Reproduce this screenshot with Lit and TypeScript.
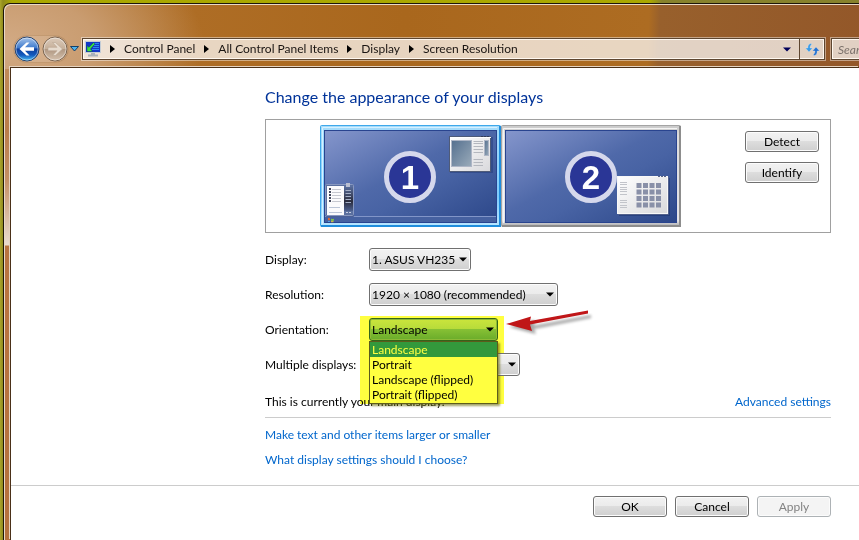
import { LitElement, html, css, svg, nothing } from "lit";
import { customElement, property, state } from "lit/decorators.js";
import { classMap } from "lit/directives/class-map.js";

const range = (n: number) => Array.from({ length: n }, (_, i) => i);

@customElement("display-monitor")
class DisplayMonitor extends LitElement {
  @property({ type: Number }) number = 1;
  @property({ type: Boolean }) selected = false;

  static styles = css`
    :host { display: block; }
    button { display: block; padding: 0; border: 0; background: none; cursor: pointer; }
    svg { display: block; }
    .digit { font: bold 33px "Liberation Sans", Arial, sans-serif; fill: #fff; text-anchor: middle; }
  `;

  private desktopOne() {
    return svg`
      <path d="M5 91.5H176" stroke="#8195c8" />
      <rect x="5" y="92" width="171" height="5" fill="#4661a0" />
      <path d="M8 93q2-1 2 1v1.500q-1-1-2 0z" fill="#e0662e" />
      <path d="M11 93.500q2 1 3 0v2q-2 1-3 0z" fill="#7fc04a" />
      <path d="M8 96q2-1 2 1h-2z" fill="#4aa0e8" />
      <path d="M11 96.200h2.500v1h-2.500z" fill="#f2c63c" />
      <rect x="6" y="60" width="28" height="32" rx="1" fill="#34497f" opacity=".7" />
      <rect x="5.500" y="59.500" width="28" height="31" rx="1" fill="#5a6f9f" stroke="#8898c0" />
      <rect x="24" y="62" width="9" height="24" fill="url(#dark)" />
      <rect x="26" y="58" width="4" height="4" fill="#b9bed0" />
      <rect x="7" y="61" width="17" height="29" fill="#fbfbfd" />
      ${range(5).map((i) => svg`
        <rect x="9" y=${63 + i * 3} width="2" height="2" fill="#44485c" />
        <path d="M12 ${64.5 + i * 3}H21" stroke="#c6c8d0" />
        <path d="M25.500 ${65.5 + i * 3}H31" stroke="#a5b0c8" />`)}
      <path d="M9 82.500H20M9 87.500H22" stroke="#bcc6d8" />
      <path d="M26 87.500H32" stroke="#c6cde0" stroke-dasharray="2 1" />
      <rect x="130" y="12" width="43" height="36" fill="#223a78" opacity=".5" />
      <rect x="129.500" y="11.500" width="41" height="35" fill="url(#panel)" stroke="#4f5b78" />
      <path d="M130 12.500H171" stroke="#fff" />
      <path d="M161 11.500H170" stroke="#333c58" stroke-dasharray="2 1" />
      <rect x="131.500" y="15.500" width="20" height="26" fill="url(#photo)" stroke="#aeb6c6" />
      <path d="M153.500 16.500H163M153.500 18.500H163M153.500 21.500H163M153.500 24.500H163M153.500 27.500H163M153.500 34.500H163M153.500 37.500H163M153.500 40.500H163" stroke="#b4b7be" />
      <rect x="164.500" y="15.500" width="4" height="15" fill="url(#photo)" stroke="#aeb6c6" />`;
  }

  private desktopTwo() {
    return svg`
      <rect x="118" y="53" width="51" height="38" fill="#182f6c" opacity=".5" />
      <rect x="116.500" y="51.500" width="50" height="37" fill="url(#panel)" stroke="#f8f8f8" />
      <path d="M167.500 52V89.500H117" stroke="#53618c" fill="none" />
      <path d="M157 51.500H166" stroke="#596487" stroke-dasharray="2 1" />
      ${[57, 59, 62, 64, 66, 69, 75, 77, 80, 82].map((y) => svg`<path d="M119 ${y + 0.5}H126" stroke="#c2c4ca" />`)}
      ${range(16).map((i) => svg`
        <rect x=${135.5 + (i % 4) * 6.5} y=${58 + Math.floor(i / 4) * 6.5} width="5" height="5" fill="#8990a8" />`)}`;
  }

  render() {
    const w = this.selected ? 181 : 180;
    return html`
      <button aria-pressed=${this.selected} aria-label="Display ${this.number}">
        <svg width=${w} height="102" viewBox="0 0 ${w} 102">
          <defs>
            <linearGradient id="screen" x1="0" y1="0" x2="1" y2="1">
              <stop offset="0" stop-color="#8596cc" /><stop offset=".45" stop-color="#4f69a9" />
              <stop offset=".6" stop-color="#4863a4" /><stop offset="1" stop-color="#2c4789" />
            </linearGradient>
            <linearGradient id="glow" x1="0" y1="0" x2="0" y2="1">
              <stop offset="0" stop-color="#a6dcfb" /><stop offset=".7" stop-color="#7fcafb" />
              <stop offset="1" stop-color="#b9e6ff" />
            </linearGradient>
            <linearGradient id="silver" x1="0" y1="0" x2="0" y2="1">
              <stop offset="0" stop-color="#c9c9c9" /><stop offset=".1" stop-color="#dedede" />
              <stop offset=".94" stop-color="#e4e4e8" /><stop offset="1" stop-color="#a8a8a8" />
            </linearGradient>
            <linearGradient id="panel" x1="0" y1="0" x2="1" y2="1">
              <stop offset="0" stop-color="#fff" /><stop offset="1" stop-color="#d9d9dc" />
            </linearGradient>
            <linearGradient id="photo" x1="0" y1="0" x2="1" y2="1">
              <stop offset="0" stop-color="#55708f" /><stop offset="1" stop-color="#9aabba" />
            </linearGradient>
            <linearGradient id="dark" x1="0" y1="0" x2="0" y2="1">
              <stop offset="0" stop-color="#566a98" /><stop offset=".6" stop-color="#2b2c3c" />
              <stop offset="1" stop-color="#4c6090" />
            </linearGradient>
          </defs>
          ${this.selected
            ? svg`<rect x=".5" y=".5" width=${w - 1} height="101" rx="1" fill="url(#glow)" stroke="#3fa8ea" />
                <path d="M${w - 1} 1V101H1" fill="none" stroke="#1f8ddc" stroke-width="2" />
                <path d="M2.500 99V2.500H${w - 4}" fill="none" stroke="#d5f0ff" />`
            : svg`<rect x=".5" y=".5" width=${w - 1} height="101" rx="1" fill="url(#silver)" stroke="#a4a4a4" />
                <path d="M${w - 1} 1V101H1" fill="none" stroke="#8d8d8d" stroke-width="2" />
                <path d="M2.500 98V3.500H${w - 4}" fill="none" stroke="#f4f4f4" />`}
          <rect x="4.500" y="5.500" width=${w - 9} height="92" fill="url(#screen)" stroke="#29448f" />
          ${this.number === 1 ? this.desktopOne() : nothing}
          <circle cx=${w >> 1} cy="52" r="23.500" fill="#2a3696" stroke="#d5d8ec" stroke-width="5" />
          <text class="digit" x=${w >> 1} y="64">${this.number}</text>
          ${this.number === 2 ? this.desktopTwo() : nothing}
        </svg>
      </button>`;
  }
}

@customElement("app-root")
class AppRoot extends LitElement {
  @state() private orientation = "Landscape";

  private readonly crumbs = ["Control Panel", "All Control Panel Items", "Display", "Screen Resolution"];
  private readonly orientations = ["Landscape", "Portrait", "Landscape (flipped)", "Portrait (flipped)"];

  static styles = css`
    :host {
      display: flex;
      box-sizing: border-box;
      min-height: 100vh;
      padding: 3px 0 0 3px;
      background: linear-gradient(90deg, #aaa52c, #8f8a1c 3px, #aaa800 12px, #aaa800 650px, #87822c 662px);
      font: 12px/18px Lato, "Open Sans", sans-serif;
      color: #000;
      overflow: hidden;
    }
    * { box-sizing: border-box; }
    button, input, select { font: inherit; color: inherit; margin: 0; }
    svg { display: block; flex: none; }

    .window {
      flex: 1;
      min-width: 0;
      display: flex;
      flex-direction: column;
      border: solid #1d1608;
      border-width: 1px 0 0 1px;
      border-radius: 7px 0 0 0;
      box-shadow: inset 1px 1px #ead9c6;
      padding: 1px 0 0 6px;
      background:
        linear-gradient(#c08a58, #b97c4a 60px, #c48f64 110px, #e9dccf 176px, #b97440 177px, #b4703c) 0 65px / 6px 100% no-repeat,
        radial-gradient(ellipse 200px 110px at 0 40px, #d2aa84, #c99c70 45%, #c99c7000),
        linear-gradient(92deg, #b67c3c, #ae6d25 190px, #a9671d 400px, #ad6c22 645px, #98602c 656px, #935729);
    }
    .toolbar {
      display: flex;
      align-items: center;
      padding: 33px 0 6px 4px;
    }
    .travel { display: flex; align-items: center; height: 22px; }
    .travel button { padding: 0; border: 0; background: none; }
    .pair {
      display: flex;
      gap: 2px;
      border-radius: 13px;
      background: #ffffff20;
      box-shadow: 0 0 1px #6b4520;
    }
    .pages { margin: 0 3px 0 2px; }

    .address {
      flex: 1;
      min-width: 0;
      height: 22px;
      display: flex;
      align-items: stretch;
      border: 1px solid #5d4630;
      background: #ffffffb8;
      box-shadow: 0 0 0 1px #ffffff70, inset 0 0 0 1px #fff8f0;
    }
    .crumbs {
      flex: 1;
      min-width: 0;
      display: flex;
      align-items: center;
      margin: 0;
      padding: 0 0 0 2px;
      list-style: none;
      white-space: nowrap;
    }
    .crumbs li { display: flex; align-items: center; }
    .crumbs .arrow { margin: 0 9px; }
    .crumbs a { color: #1a1512; text-decoration: none; }
    .tool {
      width: 25px;
      display: grid;
      place-items: center;
      padding: 0;
      border: 0;
      background: none;
    }
    .refresh { border-left: 1px solid #5d4630; }
    .search {
      flex: none;
      width: 28px;
      height: 22px;
      margin-left: 6px;
      padding: 0 0 0 6px;
      border: 1px solid #5d4630;
      border-right: 0;
      border-radius: 0;
      background: #ffffffb8;
      box-shadow: 0 0 0 1px #ffffff70, inset 1px 0 #fff8f0, inset 0 1px #fff8f0, inset 0 -1px #fff8f0;
      font-style: italic;
    }
    .search::placeholder { color: #7b716b; opacity: 1; }

    .page {
      flex: 1;
      border: solid #4a3018;
      border-width: 1px 0 0 1px;
      box-shadow: -1px -1px #e6d3bf;
      margin-top: 1px;
      background: #fff;
    }
    .settings { padding: 19px 28px 16px 254px; }
    h1 {
      margin: 0 0 12px;
      font-size: 16px;
      font-weight: 400;
      line-height: 20px;
      color: #003399;
    }
    .preview {
      display: flex;
      height: 114px;
      border: 1px solid #a0a0a0;
      padding: 5px 11px 5px 0;
    }
    .monitors { flex: 1; display: flex; justify-content: center; padding-right: 11px; }
    .actions { display: flex; flex-direction: column; gap: 10px; padding-top: 6px; }
    .push {
      width: 74px;
      height: 21px;
      padding: 0;
      border: 1px solid #707070;
      border-radius: 3px;
      background: linear-gradient(#f2f2f2, #ebebeb 49%, #dddddd 50%, #cfcfcf);
      box-shadow: inset 0 0 0 1px #fcfcfc;
      line-height: 18px;
    }
    .push:disabled { border-color: #adb2b5; background: #f4f4f4; color: #838383; }

    .form {
      display: grid;
      grid-template-columns: 104px 1fr;
      row-gap: 12px;
      align-items: center;
      margin-top: 15px;
    }
    .form label { white-space: nowrap; }
    .field { position: relative; display: grid; height: 23px; align-items: center; }
    .short { width: 102px; }
    .long { width: 189px; }
    .medium { width: 129px; }
    .wide { width: 151px; }
    .field select, .caret { grid-area: 1 / 1; }
    .caret { justify-self: end; margin-right: 4px; pointer-events: none; }
    .field select {
      appearance: none;
      width: 100%;
      height: 23px;
      padding: 0 14px 0 2px;
      border: 1px solid #707070;
      border-radius: 3px;
      background: linear-gradient(#f2f2f2, #ebebeb 49%, #dddddd 50%, #cfcfcf);
      box-shadow: inset 0 0 0 1px #fcfcfc;
    }
    .field.open select {
      position: relative;
      z-index: 1;
      border-color: #35651a;
      background: linear-gradient(#cbe53c, #b6db3a 49%, #86c034 50%, #6aac2a);
      box-shadow: inset 0 0 0 1px #8dba36;
    }
    .open .caret { position: relative; z-index: 1; }
    .marker {
      position: absolute;
      inset: -2px -6px -63px -9px;
      background: #ffff40;
      mix-blend-mode: multiply;
      pointer-events: none;
    }
    .list {
      position: absolute;
      z-index: 1;
      top: 23px;
      left: 0;
      right: 0;
      margin: 0;
      padding: 0 0 1px;
      border: 1px solid #5c5c1c;
      background: #ffff40;
      box-shadow: 2px 2px 2px #62620099;
      list-style: none;
      line-height: 15px;
      cursor: default;
    }
    .list li { padding: 0 2px; white-space: nowrap; }
    .list .chosen { background: #33993c; color: #ffff40; }
    .pointer { position: absolute; left: 134px; top: -12px; pointer-events: none; }

    .status {
      display: flex;
      justify-content: space-between;
      margin: 17px 0 8px;
      padding-bottom: 6px;
      border-bottom: 1px solid #ccc;
    }
    .settings a { color: #0066cc; text-decoration: none; }
    .links { display: grid; justify-items: start; gap: 7px; }
    .commit {
      display: flex;
      justify-content: flex-end;
      gap: 8px;
      padding: 10px 28px 22px 0;
      border-top: 1px solid #ccc;
    }
  `;

  private caret = () => html`
    <svg class="caret" width="8" height="5" viewBox="0 0 8 5" aria-hidden="true"><path d="M0 0.500H8L4 4.500z" fill="#000" /></svg>`;

  private arrow = () => html`
    <svg class="arrow" width="5" height="8" viewBox="0 0 5 8" aria-hidden="true"><path d="M0 0L5 4L0 8z" fill="#000" /></svg>`;

  private travelButton(back: boolean) {
    const id = back ? "orb-back" : "orb-forward";
    return html`
      <button aria-label=${back ? "Back" : "Forward"} ?disabled=${!back}>
        <svg width="26" height="26" viewBox="0 0 26 26">
          <defs>
            <linearGradient id=${id} x1="0" y1="0" x2="0" y2="1">
              ${back
                ? svg`<stop offset="0" stop-color="#a9c6ea" /><stop offset=".45" stop-color="#3f7bce" />
                    <stop offset=".5" stop-color="#0f3f9c" /><stop offset=".75" stop-color="#1259bd" /><stop offset="1" stop-color="#4dc4f8" />`
                : svg`<stop offset="0" stop-color="#dccbbb" /><stop offset=".48" stop-color="#c6b09a" />
                    <stop offset=".52" stop-color="#b09882" /><stop offset="1" stop-color="#d6c2ae" />`}
            </linearGradient>
          </defs>
          <circle cx="13" cy="13" r="12" fill="url(#${id})" stroke=${back ? "#27436e" : "#7a6450"} />
          <circle cx="13" cy="13" r="11" fill="none" stroke="#fff" stroke-opacity=".45" />
          ${back
            ? svg`<path d="M5.500 13L12.500 6.500H15.500L11 11.300H20V14.700H11L15.500 19.500H12.500z" fill="#fff" />`
            : svg`<path d="M20.500 13L13.500 6.500H10.500L15 11.300H6V14.700H15L10.500 19.500H13.500z" fill="#e6dacd" stroke="#b9a591" stroke-width=".6" />`}
        </svg>
      </button>`;
  }

  private toolbar() {
    return html`
      <header class="toolbar">
        <div class="travel">
          <div class="pair">${this.travelButton(true)}${this.travelButton(false)}</div>
          <button class="pages" aria-label="Recent pages">
            <svg width="9" height="6" viewBox="0 0 9 6"><path d="M.500 .500H8.500L4.500 5z" fill="#4fb4ee" stroke="#14406a" /></svg>
          </button>
        </div>
        <nav class="address" aria-label="Address">
          <ol class="crumbs">
            <li>
              <svg width="16" height="16" viewBox="0 0 16 16" aria-hidden="true">
                <rect x=".500" y=".500" width="15" height="11" fill="#1237c8" stroke="#c3ccd6" />
                <path d="M8 2.500H14M9 4.500H14M8 6.500H14M7 8.500H14" stroke="#2c86f0" />
                <path d="M2 10.500V4.500L4 6.300L8.500 1.500L10 3L5.500 8L7.700 10.500z" fill="#3ae43a" stroke="#0b2a7c" stroke-width=".5" />
                <path d="M6 12H10V13.500H13V15.500H3V13.500H6z" fill="#a9b1ba" />
              </svg>
            </li>
            ${this.crumbs.map((c) => html`<li>${this.arrow()}<a href="#">${c}</a></li>`)}
          </ol>
          <button class="tool" aria-label="Previous locations">
            <svg width="8" height="5" viewBox="0 0 8 5"><path d="M0 .500H8L4 4.500z" fill="#00005a" /></svg>
          </button>
          <button class="tool refresh" aria-label="Refresh">
            <svg width="15" height="13" viewBox="0 0 15 13">
              <path d="M6.500 .500Q2.800 .500 2.800 5H.500L4 9L7.500 5H5Q5 2.500 6.500 1.500z" fill="#3a9be6" stroke="#e8f2fa" stroke-width=".3" />
              <path d="M8.500 12.500Q12.200 12.500 12.200 8H14.500L11 4L7.500 8H10Q10 10.500 8.500 11.500z" fill="#2270d0" stroke="#e8f2fa" stroke-width=".3" />
            </svg>
          </button>
        </nav>
        <input class="search" type="text" aria-label="Search Control Panel" placeholder="Search Control Panel" />
      </header>`;
  }

  private row(id: string, label: string, size: string, value: string) {
    return html`
      <label for=${id}>${label}</label>
      <div class="field ${size}">
        <select id=${id}><option>${value}</option></select>
        ${this.caret()}
      </div>`;
  }

  render() {
    return html`
      <div class="window">
        ${this.toolbar()}
        <main class="page">
          <section class="settings">
            <h1>Change the appearance of your displays</h1>
            <div class="preview">
              <div class="monitors">
                <display-monitor .number=${1} selected></display-monitor>
                <display-monitor .number=${2}></display-monitor>
              </div>
              <div class="actions">
                <button class="push">Detect</button>
                <button class="push">Identify</button>
              </div>
            </div>
            <div class="form">
              ${this.row("display", "Display:", "short", "1. ASUS VH235")}
              ${this.row("resolution", "Resolution:", "long", "1920 × 1080 (recommended)")}
              <label for="orientation">Orientation:</label>
              <div class="field medium open">
                <select id="orientation" .value=${this.orientation}
                  @change=${(e: Event) => (this.orientation = (e.target as HTMLSelectElement).value)}>
                  ${this.orientations.map((o) => html`<option ?selected=${o === this.orientation}>${o}</option>`)}
                </select>
                ${this.caret()}
                <div class="marker"></div>
                <ul class="list" role="listbox" aria-label="Orientation">
                  ${this.orientations.map((o) => html`
                    <li role="option" aria-selected=${o === this.orientation}
                      class=${classMap({ chosen: o === this.orientation })}
                      @click=${() => (this.orientation = o)}>${o}</li>`)}
                </ul>
                <svg class="pointer" width="92" height="34" viewBox="0 0 92 34" aria-hidden="true">
                  <defs><filter id="soft"><feGaussianBlur stdDeviation="1.500" /></filter></defs>
                  <path d="M3 18L29 11L28 16.500L85 6V9L28 20L30 25z" transform="translate(3 3)" fill="#000" opacity=".35" filter="url(#soft)" />
                  <path d="M3 18L28 10.500L27 15L85 4.500V7.500L27 18.500L29 25z" fill="#c01618" />
                </svg>
              </div>
              ${this.row("multiple", "Multiple displays:", "wide", "")}
            </div>
            <div class="status">
              <span>This is currently your main display.</span>
              <a href="#">Advanced settings</a>
            </div>
            <div class="links">
              <a href="#">Make text and other items larger or smaller</a>
              <a href="#">What display settings should I choose?</a>
            </div>
          </section>
          <footer class="commit">
            <button class="push">OK</button>
            <button class="push">Cancel</button>
            <button class="push" disabled>Apply</button>
          </footer>
        </main>
      </div>`;
  }
}
